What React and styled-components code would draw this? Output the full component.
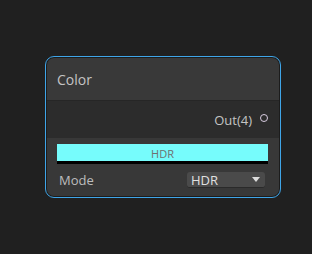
import styled, { createGlobalStyle } from "styled-components";

const GlobalStyle = createGlobalStyle`
  html, body {
    margin: 0;
    padding: 0;
    background: #202020;
  }
  body {
    font-family: "Open Sans", "Noto Sans", sans-serif;
  }
`;

const Page = styled.div`
  width: 312px;
  height: 254px;
  padding: 56px 0 0 45px;
  box-sizing: border-box;
`;

const Node = styled.div`
  width: 236px;
  height: 142px;
  box-sizing: border-box;
  border: 1px solid #3fa5e8;
  border-radius: 9px;
  padding: 1px;
  background: #1c1c1c;
`;

const Inner = styled.div`
  height: 100%;
  border-radius: 7px;
  overflow: hidden;
  display: flex;
  flex-direction: column;
`;

const Header = styled.div`
  height: 43px;
  flex: none;
  background: #393939;
  display: flex;
  align-items: center;
  padding-left: 10px;
  padding-top: 1px;
  box-sizing: border-box;
  color: #c4c4c4;
  font-size: 14px;
  border-bottom: 1px solid #262626;
`;

const PortRow = styled.div`
  height: 37px;
  flex: none;
  background: #2c2c2c;
  display: flex;
  justify-content: flex-end;
  align-items: center;
  padding-right: 11px;
  gap: 8px;
  color: #c4c4c4;
  font-size: 13px;
`;

const Port = styled.span`
  width: 6px;
  height: 6px;
  border: 1.5px solid #d8cce0;
  border-radius: 50%;
  margin-top: -3px;
`;

const Body = styled.div`
  flex: 1;
  background: #383838;
  padding: 6px 11px 0 10px;
  display: flex;
  flex-direction: column;
`;

const Swatch = styled.div`
  height: 17px;
  background: #76fcfc;
  border-bottom: 3px solid #000;
  display: flex;
  align-items: flex-end;
  justify-content: center;
  color: #707070;
  font-size: 11px;
  line-height: 15px;
`;

const Field = styled.div`
  margin-top: 7px;
  display: flex;
  justify-content: space-between;
  align-items: center;
  padding-left: 2px;
  padding-right: 3px;
`;

const Label = styled.span`
  color: #bdbdbd;
  font-size: 13px;
`;

const Select = styled.div`
  width: 78px;
  height: 16px;
  box-sizing: border-box;
  background: #4a4a4a;
  border-radius: 3px;
  border-bottom: 1px solid #2a2a2a;
  display: flex;
  align-items: center;
  justify-content: space-between;
  padding: 0 5px 0 4px;
  color: #e0e0e0;
  font-size: 13px;
`;

const Caret = styled.span`
  width: 0;
  height: 0;
  border-left: 4px solid transparent;
  border-right: 4px solid transparent;
  border-top: 5px solid #dcdcdc;
`;

export default function App() {
  return (
    <>
      <GlobalStyle />
      <Page>
        <Node>
          <Inner>
            <Header>Color</Header>
            <PortRow>
              <span>Out(4)</span>
              <Port />
            </PortRow>
            <Body>
              <Swatch>HDR</Swatch>
              <Field>
                <Label>Mode</Label>
                <Select>
                  <span>HDR</span>
                  <Caret />
                </Select>
              </Field>
            </Body>
          </Inner>
        </Node>
      </Page>
    </>
  );
}
